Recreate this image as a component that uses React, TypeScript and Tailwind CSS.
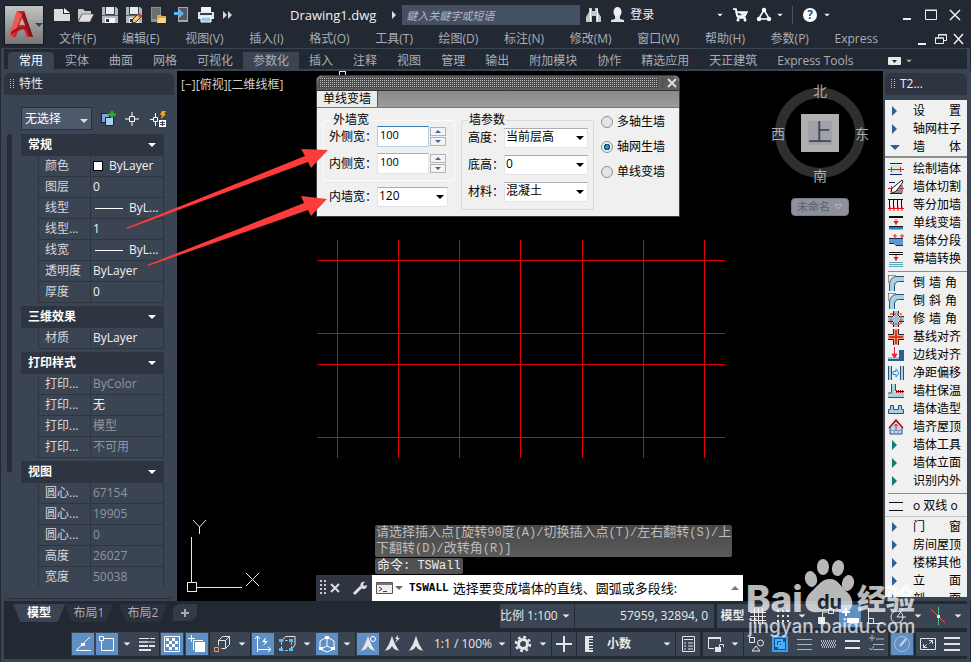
import type { ReactNode } from "react";
import clsx from "clsx";

type IconProps = { children: ReactNode; className?: string; size?: number };

function Icon({ children, className, size = 16 }: IconProps) {
  return (
    <svg viewBox={`0 0 ${size} ${size}`} width={size} height={size} className={clsx("shrink-0", className)} fill="none" aria-hidden="true">
      {children}
    </svg>
  );
}

function Caret({ className }: { className?: string }) {
  return (
    <svg viewBox="0 0 8 4" width="8" height="4" className={clsx("shrink-0", className)} aria-hidden="true">
      <path d="M0 0h8L4 4z" fill="currentColor" />
    </svg>
  );
}

function Grip() {
  return (
    <svg width="5" height="10" className="shrink-0" aria-hidden="true">
      {[0, 2, 4, 6, 8].map((y) => (
        <path key={y} d={`M0 ${y + 0.5}h1M3 ${y + 0.5}h1`} stroke="#b9bec7" />
      ))}
    </svg>
  );
}

/* ---------- title bar ---------- */

const floppy = (
  <>
    <path d="M0 0h14l2 2v14H0z" fill="#b4b7bb" />
    <path d="M3 0h10v8H3z" fill="#3a4049" />
    <path d="M4 0h8v7H4z" fill="#e9eaec" />
    <path d="M0 8h16v1H0z" fill="#5a6069" />
    <path d="M3 11h10v5H3z" fill="#f6f6f6" />
    <path d="M4 12h3v3H4z" fill="#2c323c" />
  </>
);

const quickAccess: { name: string; art: ReactNode }[] = [
  { name: "新建", art: <><path d="M0 2h9v5h7v7H0z" fill="#dcdcdc" /><path d="M10 1v5h6z" fill="#f5f5f5" /></> },
  { name: "打开", art: <><path d="M0 2h5l2 2h6v3H4L0 14z" fill="#c9c9c9" /><path d="M4 7h12l-4 8H0z" fill="#e0e0e0" stroke="#222933" strokeWidth=".5" /></> },
  { name: "保存", art: floppy },
  { name: "另存为", art: <>{floppy}<path d="M6 16l1-4 6-6 3 3-6 6z" fill="#f4c862" stroke="#39332a" /><path d="M12 7l3 3" stroke="#e24b3c" strokeWidth="3" /></> },
  { name: "从移动设备打开", art: <><path d="M1 0h10v15H1z" fill="#8f8f8f" /><path d="M2 1h8v11H2z" fill="#6d6d6d" /><path d="M7 8h4l1 1h4v7H7z" fill="#e0ad4c" /><path d="M9 11h8l-2 5H7z" fill="#f9d68b" /></> },
  { name: "保存到移动设备", art: <><path d="M4 0h10v15H4z" fill="#a8a8a8" /><path d="M5 1h8v12H5z" fill="#55595f" /><path d="M0 5h5V2l5 4.500-5 4.500V8H0z" fill="#55b7f5" /></> },
  { name: "打印", art: <><path d="M3 0h10v5H3z" fill="#f2f2f2" /><path d="M0 5h16v7H0z" fill="#e4e4e4" /><path d="M2 6h12v2H2z" fill="#3a4049" /><path d="M3 10h10v5H3z" fill="#8ecbf7" stroke="#fff" /></> },
];

const menus = ["文件(F)", "编辑(E)", "视图(V)", "插入(I)", "格式(O)", "工具(T)", "绘图(D)", "标注(N)", "修改(M)", "窗口(W)", "帮助(H)", "参数(P)", "Express"];

const ribbonTabs = ["实体", "曲面", "网格", "可视化", "参数化", "插入", "注释", "视图", "管理", "输出", "附加模块", "协作", "精选应用", "天正建筑", "Express Tools"];

function Header() {
  return (
    <header className="flex h-12 shrink-0">
      <button aria-label="应用程序菜单" className="mt-[5px] ml-1 flex h-10 w-10 shrink-0 items-center border border-[#161a20] bg-linear-to-b from-[#c4c4c4] to-[#777]">
        <svg viewBox="0 0 26 28" width="26" height="28" className="ml-1" aria-hidden="true">
          <path d="M8 0h7l9 26h-6l-3-8c-5 0-7 3-8 8H0z" fill="#c9252b" />
          <path d="M8 0L0 26l3 1L13 4z" fill="#ee5a58" />
          <path d="M2 21c5-5 10-6 17-5l1 3c-8-2-13 0-18 6z" fill="#a1151c" />
          <path d="M15 0l9 26-4-1L13 4z" fill="#84131a" />
          <path d="M10 14l3-7 3 7z" fill="#c6a9a9" />
        </svg>
        <Caret className="text-[#39414e]" />
      </button>
      <div className="min-w-0 flex-1">
        <div className="flex h-[29px] items-center pt-px text-[#f0f0f0]">
          <div className="ml-2.5 flex gap-2">
            {quickAccess.map((q) => (
              <button key={q.name} aria-label={q.name}>
                <Icon>{q.art}</Icon>
              </button>
            ))}
            <button aria-label="更多">
              <Icon><path d="M1 4l4 4-4 4zM6 4l4 4-4 4z" fill="#d6d6d6" /></Icon>
            </button>
          </div>
          <h1 className="ml-13 text-[13px] leading-5 whitespace-nowrap">Drawing1.dwg</h1>
          <svg width="4" height="8" className="mr-1.5 ml-4 shrink-0" aria-hidden="true"><path d="M0 0l4 4-4 4z" fill="#ddd" /></svg>
          <input aria-label="搜索" placeholder="鍵入关鍵字或短语" className="h-5 w-[178px] bg-[#465063] px-1 text-[11px] italic outline-none placeholder:text-[#b4bac4]" />
          <button aria-label="查找" className="ml-1.5">
            <Icon>
              <path d="M3 1h3v3h3V1h3v4l3 5v5h-5V9H6v6H0v-5l3-5z" fill="#c4c8cd" />
              <path d="M4.500 2v12M11.500 2v12" stroke="#fff" />
            </Icon>
          </button>
          <button className="ml-2 flex items-center gap-1 text-xs">
            <Icon><ellipse cx="7.500" cy="5" rx="4" ry="5" fill="#eceef0" /><path d="M5 9h5v3l4 1v2H1v-2l4-1z" fill="#dfe1e4" /></Icon>
            登录
          </button>
          <div className="ml-auto flex items-center pr-2">
            <Caret className="mr-2 scale-75" />
            <button aria-label="应用商店"><Icon><path d="M1 2h3l2 9h8M4 5h11l-2 4H5z" stroke="#fff" strokeWidth="1.500" fill="#e4e8ee" /><circle cx="6" cy="13" r="1.500" fill="#fff" /><circle cx="13" cy="13" r="1.500" fill="#fff" /></Icon></button>
            <button aria-label="保持连接" className="mr-1 ml-2"><Icon><path d="M8 3L2.500 12h11z" stroke="#fff" strokeWidth="1.500" /><circle cx="8" cy="3" r="2.200" fill="#fff" /><circle cx="3" cy="12" r="2.200" fill="#fff" /><circle cx="13" cy="12" r="2.200" fill="#fff" /></Icon></button>
            <Caret className="scale-75" />
            <span className="mr-2.5 ml-2 h-4.5 w-px bg-[#4b5568]" />
            <button aria-label="帮助" className="flex h-3.5 w-3.5 items-center justify-center rounded-full bg-white text-xs font-bold text-[#1f4e9c]">?</button>
            <Caret className="ml-1.5 scale-75" />
            <div className="ml-17 flex items-center gap-2">
              <button aria-label="最小化"><Icon><path d="M4 12h8" stroke="#eee" strokeWidth="2" /></Icon></button>
              <button aria-label="最大化"><Icon><path d="M2.500 3.500h11v9h-11z" stroke="#eee" /><path d="M2 3h12" stroke="#eee" /></Icon></button>
              <button aria-label="关闭"><Icon><path d="M3 3l10 10M13 3L3 13" stroke="#eee" strokeWidth="1.500" /></Icon></button>
            </div>
          </div>
        </div>
        <nav className="flex h-[19px] items-center pl-[15px] text-xs whitespace-nowrap text-[#a9aeb6]">
          <div className="flex max-w-[819px] flex-1 justify-between">
            {menus.map((m) => (
              <button key={m}>{m}</button>
            ))}
          </div>
          <div className="ml-auto flex gap-0.5 pr-1">
            <button aria-label="最小化图形"><Icon><path d="M3 13h8" stroke="#eee" strokeWidth="2" /></Icon></button>
            <button aria-label="还原图形"><Icon><path d="M5.500 6V3.500h8v6H11M2.500 7h8v5.500h-8z" stroke="#eee" /><path d="M5 4h9M2 7h9" stroke="#eee" /></Icon></button>
            <button aria-label="关闭图形"><Icon><path d="M3 3l9 10M12 3L3 13" stroke="#eee" strokeWidth="1.500" /></Icon></button>
          </div>
        </nav>
      </div>
    </header>
  );
}

function Ribbon() {
  return (
    <nav className="mx-px flex h-[23px] shrink-0 items-end border-x-3 border-t border-b-2 border-[#3b4453] bg-[#222933] pl-1 text-xs whitespace-nowrap text-[#a9aeb6]">
      <button className="mr-px h-[17px] w-[46px] rounded-t-sm bg-[#3b4453] leading-[17px] text-white">常用</button>
      {ribbonTabs.map((t) => (
        <button key={t} className={clsx("h-[17px] px-2.5 leading-[17px]", t === "参数化" && "bg-[#3b4453]")}>
          {t}
        </button>
      ))}
      <button aria-label="最小化功能区" className="ml-6 flex h-[17px] items-center gap-1">
        <svg width="13" height="8" aria-hidden="true"><rect width="13" height="8" rx="1" fill="#e8e8e8" /><path d="M4 3h5L6.500 6z" fill="#222933" /></svg>
        <Caret className="scale-75" />
      </button>
    </nav>
  );
}

/* ---------- properties palette ---------- */

type Row = { label: string; value: string; kind?: "swatch" | "line"; muted?: boolean };

const sections: { title: string; rows: Row[] }[] = [
  {
    title: "常规",
    rows: [
      { label: "颜色", value: "ByLayer", kind: "swatch" },
      { label: "图层", value: "0" },
      { label: "线型", value: "ByL...", kind: "line" },
      { label: "线型...", value: "1" },
      { label: "线宽", value: "ByL...", kind: "line" },
      { label: "透明度", value: "ByLayer" },
      { label: "厚度", value: "0" },
    ],
  },
  { title: "三维效果", rows: [{ label: "材质", value: "ByLayer" }] },
  {
    title: "打印样式",
    rows: [
      { label: "打印...", value: "ByColor", muted: true },
      { label: "打印...", value: "无" },
      { label: "打印...", value: "模型", muted: true },
      { label: "打印...", value: "不可用", muted: true },
    ],
  },
  {
    title: "视图",
    rows: [
      { label: "圆心...", value: "67154", muted: true },
      { label: "圆心...", value: "19905", muted: true },
      { label: "圆心...", value: "0", muted: true },
      { label: "高度", value: "26027", muted: true },
      { label: "宽度", value: "50038", muted: true },
    ],
  },
];

function PropertiesPanel() {
  return (
    <aside className="flex w-[177px] shrink-0 flex-col border-l border-[#222933] bg-[#3b4453] px-[3px] pt-0.5 text-xs">
      <h2 className="flex h-[22px] shrink-0 items-center gap-1 rounded-t-md bg-[#2e3440] pl-1.5 text-[#e8e8e8]">
        <Grip />
        特性
      </h2>
      <div className="mt-3 flex h-[23px] items-center pl-[17px]">
        <div className="relative h-[23px] w-[71px]">
          <select aria-label="选择对象" className="h-full w-full appearance-none border border-[#2a303b] bg-[#4d586b] pl-[3px] text-white outline-none">
            <option>无选择</option>
          </select>
          <Caret className="pointer-events-none absolute top-3 right-1 text-[#ddd]" />
        </div>
        <button aria-label="切换 PICKADD" className="ml-2">
          <Icon><path d="M1.500 2.500h8v9h-8z" fill="#7ba6dc" stroke="#1c2430" /><path d="M5.500 6.500h8v8h-8z" fill="#aecbf0" stroke="#1c2430" /><path d="M12 0v7M8 3.500h8" stroke="#23b423" strokeWidth="2.500" /></Icon>
        </button>
        <button aria-label="选择对象" className="ml-2">
          <Icon><path d="M8 1v4M8 11v4M1 8h4M11 8h4" stroke="#fff" /><path d="M5.500 5.500h5v5h-5z" stroke="#fff" /></Icon>
        </button>
        <button aria-label="快速选择" className="ml-2.5">
          <Icon><path d="M5.500 2v4M5.500 11v4M0 8.500h3" stroke="#fff" /><path d="M3.500 6.500h4v4h-4z" stroke="#fff" /><path d="M12 0h4l-2 3h2l-5 5 1-4h-2z" fill="#f5a623" /><path d="M9 9h7v7H9z" fill="#fff" /><path d="M10 11.500h5M10 13.500h5M12.500 10v5" stroke="#39414e" /></Icon>
        </button>
      </div>
      <div className="mt-1 flex min-h-0 flex-1 gap-[9px] overflow-hidden pl-[3px]">
        <div className="h-[338px] w-[5px] shrink-0 rounded-full bg-[#272d38]" />
        <div className="flex w-[143px] flex-col gap-[3px]">
          {sections.map((s) => (
            <section key={s.title}>
              <h3 className="flex h-[22px] items-center justify-between bg-[#2e3440] pr-2 pl-[7px] font-bold text-white">
                {s.title}
                <Caret />
              </h3>
              <table className="ml-[17px] w-[126px] table-fixed border-separate border-spacing-0">
                <tbody>
                  {s.rows.map((r, i) => (
                    <tr key={i} className="h-[21px]">
                      <th className="h-[21px] w-[53px] border border-t-0 border-[#2e3440] p-0 pl-1.5 text-left leading-4 font-normal whitespace-nowrap text-[#d5d8dc]">{r.label}</th>
                      <td className={clsx("h-[21px] border-r border-b border-[#2e3440] p-0 pl-0.5 leading-4 whitespace-nowrap", r.muted ? "text-[#8f959f]" : "text-[#f0f0f0]")}>
                        <div className="flex items-center">
                          {r.kind === "swatch" && <span className="mr-1.5 h-2.5 w-2.5 border border-black bg-white" />}
                          {r.kind === "line" && <span className="mr-1.5 ml-0.5 h-px w-7 bg-white" />}
                          {r.value}
                        </div>
                      </td>
                    </tr>
                  ))}
                </tbody>
              </table>
            </section>
          ))}
        </div>
      </div>
      <div className="h-3 shrink-0 rounded-b-md border-b border-[#2a303b]" />
      <div className="h-0.5 shrink-0" />
    </aside>
  );
}

/* ---------- drawing area ---------- */

const gridX = [160, 221, 282, 343, 405, 466, 527];
const gridY = [189, 262, 293, 366];

function Field({ label, children }: { label: string; children: ReactNode }) {
  return (
    <label className="flex items-center">
      <span className="w-12 shrink-0">{label}</span>
      {children}
    </label>
  );
}

function Spin({ label, focused }: { label: string; focused?: boolean }) {
  return (
    <div className="flex h-[21px] items-center">
      <Field label={label}>
        <input defaultValue="100" className={clsx("h-[21px] w-[52px] border bg-white px-0.5 pb-1 text-[11px] outline-none", focused ? "border-[#b5cfe7] border-t-[#3d7bad]" : "border-[#e2e3ea] border-t-[#abadb3]")} />
      </Field>
      <div className="ml-px flex flex-col">
        <button aria-label={`${label}增加`} className="flex h-[9px] w-4 items-center justify-center border border-[#b4b4b4] bg-[#f4f4f4]">
          <svg width="6" height="3" aria-hidden="true"><path d="M0 3h6L3 0z" fill="#4660a8" /></svg>
        </button>
        <button aria-label={`${label}减少`} className="mt-px flex h-[9px] w-4 items-center justify-center border border-[#b4b4b4] bg-[#f4f4f4]">
          <svg width="6" height="3" aria-hidden="true"><path d="M0 0h6L3 3z" fill="#4660a8" /></svg>
        </button>
      </div>
    </div>
  );
}

function Drop({ value, className }: { value: string; className: string }) {
  return (
    <span className={clsx("relative block h-5", className)}>
      <select className="block h-5 w-full appearance-none border border-[#e2e3ea] border-t-[#abadb3] bg-white pb-0.5 pl-px outline-none">
        <option>{value}</option>
      </select>
      <Caret className="pointer-events-none absolute top-2 right-1" />
    </span>
  );
}

function WallDialog() {
  return (
    <div className="absolute top-1 left-[139px] w-[364px] rounded-t-md border border-[#3c3c3c] bg-[#f0f0f0] text-xs text-black">
      <div className="flex h-3.5 items-center gap-1 rounded-t-md bg-[#5c5c5c] px-0.5">
        <div className="h-2.5 flex-1 bg-[conic-gradient(#c0c0c0_25%,#484848_0)] bg-size-[2px_2px]" />
        <span className="h-2.5 w-px bg-[#444]" />
        <button aria-label="关闭">
          <Icon size={10}><path d="M1 1l8 8M9 1L1 9" stroke="#ddd" strokeWidth="2" /></Icon>
        </button>
      </div>
      <div className="flex h-[18px] border-y border-[#333] border-b-[#777] bg-linear-to-b from-[#8a8a8a] to-[#9c9c9c]">
        <button className="w-[61px] border-r border-[#555] bg-[#ececec] leading-4">单线变墙</button>
      </div>
      <form className="flex gap-1.5 px-1.5 pt-1.5 pb-1.5">
        <div className="w-[132px]">
          <fieldset className="min-w-0 rounded-xs border border-[#fcfcfc] pb-1.5 pl-[5px]">
            <legend className="px-1 leading-3">外墙宽</legend>
            <div className="flex flex-col gap-1.5">
              <Spin label="外侧宽：" focused />
              <Spin label="内侧宽：" />
            </div>
          </fieldset>
          <div className="mt-1.5 pl-1.5">
            <Field label="内墙宽：">
              <Drop value="120" className="w-[71px]" />
            </Field>
          </div>
        </div>
        <fieldset className="h-24 w-[133px] min-w-0 rounded-xs border border-[#d2dde2] pl-1.5">
          <legend className="px-px leading-3">墙参数</legend>
          <div className="flex flex-col gap-[7px] pt-0.5 [&_label>span:first-child]:w-9">
            <Field label="高度："><Drop value="当前层高" className="w-[84px]" /></Field>
            <Field label="底高："><Drop value="0" className="w-[84px]" /></Field>
            <Field label="材料："><Drop value="混凝土" className="w-[84px]" /></Field>
          </div>
        </fieldset>
        <div className="flex flex-col gap-[9px] pl-px">
          {["多轴生墙", "轴网生墙", "单线变墙"].map((r) => (
            <label key={r} className="flex h-4 items-center gap-1">
              <input
                type="radio"
                name="mode"
                defaultChecked={r === "轴网生墙"}
                className="h-3 w-3 appearance-none rounded-full border border-[#8e8f8f] bg-[#e4e4e4] checked:bg-[radial-gradient(#2a9fd0_15%,#0c3d63_45%,#eee_50%)]"
              />
              {r}
            </label>
          ))}
        </div>
      </form>
    </div>
  );
}

function ViewCube() {
  return (
    <div className="absolute top-2 right-3 flex w-[104px] flex-col items-center">
      <svg width="104" height="112" viewBox="0 0 104 112" className="font-[family-name:'Noto_Sans_CJK_SC',sans-serif]">
        <circle cx="53" cy="54" r="40" stroke="#2f2f2f" strokeWidth="10" fill="none" />
        <rect x="34" y="35" width="38" height="38" fill="#b0b0b0" />
        <rect x="41" y="42" width="24" height="24" fill="#a0a2aa" />
        <g fill="#acacac" fontSize="14" textAnchor="middle">
          <text x="53" y="17">北</text>
          <text x="53" y="102">南</text>
          <text x="11" y="60">西</text>
          <text x="95" y="60">东</text>
        </g>
        <text x="53" y="62" fontSize="24" fill="#444c57" textAnchor="middle">上</text>
      </svg>
      <button className="mt-[7px] ml-0.5 flex h-[18px] w-[58px] items-center justify-center gap-1 rounded-sm border border-[#777a84] bg-[#8e909c] text-[11px] text-[#5c5f69]">
        未命名
        <svg width="9" height="6" aria-hidden="true"><path d="M1 .5h7L4.500 5z" fill="none" stroke="#b5b7c0" /></svg>
      </button>
    </div>
  );
}

/* Latin runs sit one size below the Chinese text */
function Mixed({ text }: { text: string }) {
  return text.split(/([\x20-\x7e]+)/).map((part, i) => (
    <span key={i} className={clsx(i % 2 === 1 && "text-xs leading-[15px]")}>
      {part}
    </span>
  ));
}

function CommandLine() {
  return (
    <div className="absolute bottom-0 left-[139px] w-[427px]">
      <div className="ml-[59px] flex flex-col items-start font-[family-name:'Liberation_Mono','Noto_Sans_CJK_SC',monospace] text-[13px] leading-[15px] whitespace-nowrap text-[#bcbcbc]">
        <p className="rounded-xs bg-linear-to-b from-[#484848] to-[#5a5a5a] px-px">
          <Mixed text="请选择插入点[旋转90度(A)/切换插入点(T)/左右翻转(S)/上" />
          <br />
          <Mixed text="下翻转(D)/改转角(R)]" />
        </p>
        <p className="mt-px rounded-xs bg-[#525252] px-0.5 text-[#ececec]"><Mixed text="命令: TSWall" /></p>
      </div>
      <div className="mt-px flex h-[26px] bg-[#2e3440]">
        <div className="flex w-14 items-center pl-1">
          <svg width="6" height="18" aria-hidden="true">
            {[1, 5, 9, 13].map((y) => <path key={y} d={`M0 ${y}h2v2H0zM4 ${y}h2v2H4z`} fill="#c9c9c9" />)}
          </svg>
          <Icon size={10} className="mr-4 ml-1"><path d="M1 1l8 8M9 1L1 9" stroke="#ddd" strokeWidth="2" /></Icon>
          <Icon className="-ml-1"><path d="M2 14l7-7" stroke="#ddd" strokeWidth="3" /><path d="M9 8C7 4 10 1 13 2l-2 2 1 2 3-1c0 4-3 5-6 3z" fill="#ddd" /></Icon>
        </div>
        <label className="flex flex-1 items-center bg-white pr-1 pl-1 text-black">
          <svg width="17" height="12" aria-hidden="true"><path d="M.5.5h16v11H.5z" fill="#eee" stroke="#555" /><path d="M1 2h15" stroke="#777" strokeWidth="2" /><path d="M3 5l3 2-3 2M7 9.500h4" fill="none" stroke="#444" /></svg>
          <Caret className="ml-0.5 text-[#666]" />
          <span className="ml-1.5 font-[family-name:'DejaVu_Sans_Mono',monospace] text-[11px] font-bold">TSWALL</span>
          <span className="ml-1 text-[13px] leading-5 whitespace-nowrap">选择要变成墙体的直线、圆弧或多段线:</span>
          <input aria-label="命令" className="w-0 min-w-0 flex-1 outline-none" />
          <Caret className="rotate-180 text-[#777]" />
        </label>
      </div>
    </div>
  );
}

function Canvas() {
  return (
    <main className="relative min-w-0 flex-1 overflow-hidden bg-black">
      <p className="pt-1.5 pl-1 text-xs leading-4 text-[#d0d0d0]">[−][俯视][二维线框]</p>
      <svg className="absolute inset-0 h-full w-full" aria-hidden="true" shapeRendering="crispEdges">
        <g stroke="#e60000">
          {gridX.map((x) => <path key={x} d={`M${x + 0.5} 169V387`} />)}
          {gridY.map((y) => <path key={y} d={`M140 ${y + 0.5}H548`} />)}
        </g>
        <g stroke="#e8e8e8" fill="none">
          <path d="M14.500 466v46M19 516.500h46M10.500 511.500h9v9h-9z" />
          <path d="M162.500 5V.5h6V5" />
        </g>
        <path d="M16 449l6.500 7 6.500-7M22.500 456v7M69 502l13 13M82 502l-13 13" stroke="#e8e8e8" fill="none" shapeRendering="auto" />
      </svg>
      <WallDialog />
      <ViewCube />
      <CommandLine />
    </main>
  );
}

/* ---------- T20 tool menu ---------- */

type Tool = { text: string; art: ReactNode };

const right = <path d="M4 3l5 5-5 5z" fill="#2f6095" />;
const teal = <path d="M4 3l5 5-5 5z" fill="#0b7f78" />;
const down = <path d="M2 6h10l-5 5z" fill="#2f6095" />;
const pipe = (
  <>
    <path d="M4 16v-5c0-4 2-7 6-7h6" stroke="#a9d3df" strokeWidth="5" />
    <path d="M1.500 16v-5C1.500 5 4 1.500 9 1.500h7M6.500 16v-5c0-3 2-4.500 4-4.500H16" stroke="#2c4f7c" />
    <path d="M.5.500h7M.5.500v8" stroke="#333" strokeDasharray="1 1" />
  </>
);

const mainTools: Tool[] = [
  { text: "设置", art: right },
  { text: "轴网柱子", art: right },
  { text: "墙体", art: down },
];

const wallTools: Tool[] = [
  { text: "绘制墙体", art: <><path d="M2 4h12v8H2z" fill="#d6e8cf" /><path d="M2 2.500h12M2 13.500h12" stroke="#1b1b7a" /><path d="M0 8.500h16M3.500 6v5M12.500 6v5" stroke="#d22" /></> },
  { text: "墙体切割", art: <><path d="M8 6h7v8H5z" fill="#8e8e8e" /><path d="M1 3.500h6M2 14.500h12" stroke="#1b1b7a" /><path d="M0 9.500h5M12 9.500h4M3.500 7v5" stroke="#d22" /><path d="M3 13c0-3 2-5 4-6l7-6 1 2-6 8c-2 2-3 3-6 2z" fill="#fff" stroke="#111" /></> },
  { text: "等分加墙", art: <><path d="M0 2.500h15M1.500 2v10M5.500 2v10M9.500 2v10M13.500 2v10" stroke="#111" /><path d="M0 11.500h16M2 9v5M6 9v5M10 9v5M14 9v5" stroke="#e11" /></> },
  { text: "单线变墙", art: <><path d="M1 2h14" stroke="#111" strokeWidth="2" /><path d="M1 13h14" stroke="#1289c9" strokeWidth="3" /><path d="M1 11.500h14" stroke="#111" /><path d="M8 4v6M6 6.500h4L8 9z" fill="#e22" stroke="#e22" /></> },
  { text: "墙体分段", art: <><path d="M1 6h14v6H8L6 10H1z" fill="#5d97cf" /><path d="M1 5.500h14M1 10.500h5l2 2h7" stroke="#1c2b4d" /><path d="M5 3h4M7 1v4M12 3h4M14 1v4" stroke="#e22" /></> },
  { text: "幕墙转换", art: <><path d="M1 1.500h14M1 3.500h14" stroke="#111" /><path d="M1 11.500h14M1 13.500h14M1 15.500h14" stroke="#55a8b5" /><path d="M8 4v6M6 6.500h4L8 9z" fill="#e22" stroke="#e22" /></> },
];

const editTools: Tool[] = [
  { text: "倒墙角", art: pipe },
  { text: "倒斜角", art: pipe },
  { text: "修墙角", art: <><path d="M6 0h4v16H6zM0 6h16v4H0z" fill="#9dbedc" /><path d="M5.500 0v5M10.500 0v5M5.500 11v5M10.500 11v5M0 5.500h5M0 10.500h5M11 5.500h5M11 10.500h5" stroke="#222" /><path d="M3 3h10v10H3z" stroke="#e0522d" strokeWidth="1.500" strokeDasharray="2 1" /></> },
  { text: "基线对齐", art: <><path d="M6 0h4v16H6zM0 6h16v4H0z" fill="#f7a48e" /><path d="M5.500 0v5.500H0M10.500 0v5.500H16M5.500 16v-5.500H0M10.500 16v-5.500H16" stroke="#222" /><path d="M8 1v14M1 8h14" stroke="#e23a16" strokeWidth="2" /></> },
  { text: "边线对齐", art: <><path d="M11 3h5v11H0v-3h11z" fill="#2f5f92" /><path d="M0 11h11" stroke="#9ec7dc" strokeWidth="2" /><path d="M6.500 0v9M4 7h5l-2.500 4z" fill="#e23" stroke="#e23" /></> },
  { text: "净距偏移", art: <><path d="M1 1h3v14H1zM13 1h3v14h-3z" fill="#a9d3df" /><path d="M.5 1v14M3.500 1v14M12.500 1v14M15.500 1v14" stroke="#2c4f7c" /><path d="M5 6.500h3V4l3 4-3 4V9.500H5z" stroke="#1593e6" /></> },
  { text: "墙柱保温", art: <><path d="M3 1h4v8h9v5H0v-4h3z" fill="#a9d3df" /><path d="M3.500 1v9H0M7.500 1v7M0 14.500h16" stroke="#2c4f7c" /><path d="M8 8.500h8" stroke="#111" /><path d="M8 7.500h8M8 9.500h8" stroke="#b5121b" strokeDasharray="1 1" /></> },
  { text: "墙体造型", art: <path d="M.5 12.500V8.500h2v-4h3v4h5v-4h3v4h2v4z" fill="#a9d3df" stroke="#2c4f7c" /> },
  { text: "墙齐屋顶", art: <><path d="M2 8l6-6 6 6v7H2z" fill="#c3d5ea" stroke="#26518b" /><path d="M1 9l7-8 7 8" stroke="#b5121b" strokeWidth="1.500" /><path d="M8 11V5M6 7l2-2 2 2" stroke="#e22" /><path d="M3 11.500h10M6.500 12v3M10.500 12v3" stroke="#7a97bd" /></> },
  { text: "墙体工具", art: teal },
  { text: "墙体立面", art: teal },
  { text: "识别内外", art: teal },
];

const doubleLine: Tool[] = [{ text: "o双线o", art: <path d="M1 4.500h14M1 12.500h14" stroke="#111" /> }];

const moreTools: Tool[] = [
  { text: "门窗", art: right },
  { text: "房间屋顶", art: right },
  { text: "楼梯其他", art: right },
  { text: "立面", art: right },
  { text: "剖面", art: right },
];

function ToolList({ tools }: { tools: Tool[] }) {
  return (
    <ul>
      {tools.map((t) => (
        <li key={t.text}>
          <button className="flex h-[18px] w-full items-center gap-[9px] pl-[3px] leading-[18px]">
            <Icon>{t.art}</Icon>
            <span className={clsx("flex w-12 justify-between", t.text.length === 3 && "pr-1")}>
              {t.text === "o双线o" ? "o 双线 o" : [...t.text].map((c, i) => <span key={i}>{c}</span>)}
            </span>
          </button>
        </li>
      ))}
    </ul>
  );
}

function ToolPanel() {
  return (
    <aside className="flex w-[88px] shrink-0 flex-col bg-[#3b4453] pt-0.5 pr-1 pb-1 pl-0.5 text-xs">
      <h2 className="mb-[5px] flex h-[22px] shrink-0 items-center gap-1 rounded-t-md bg-[#2e3440] pl-1.5 text-[#eee]">
        <Grip />
        T2...
      </h2>
      <div className="min-h-0 flex-1 overflow-hidden bg-[#f0f0f0] pt-0.5 text-black">
        <ToolList tools={mainTools} />
        <div className="mb-0.5 h-0.5 bg-[#8c8c8c]" />
        <ToolList tools={wallTools} />
        <div className="mt-[3px] mb-0.5 ml-[3px] h-px bg-[#8c8c8c]" />
        <ToolList tools={editTools} />
        <div className="my-[3px] ml-[3px] h-px bg-[#8c8c8c]" />
        <ToolList tools={doubleLine} />
        <div className="mt-px mb-px h-px bg-[#c4c4c4]" />
        <ToolList tools={moreTools} />
      </div>
    </aside>
  );
}

/* ---------- status bars ---------- */

function Cell({ name, on, children }: { name: string; on?: boolean; children: ReactNode }) {
  return (
    <button aria-label={name} className={clsx("flex h-6 w-6 shrink-0 items-center justify-center", on && "border border-[#3b4453] bg-[#5f8fc4]")}>
      <Icon size={18}>{children}</Icon>
    </button>
  );
}

function More() {
  return (
    <button aria-label="更多选项" className="flex h-6 w-4 shrink-0 items-center justify-center">
      <Caret className="scale-90" />
    </button>
  );
}

function Group({ children, className }: { children: ReactNode; className?: string }) {
  return <div className={clsx("flex h-6 items-center bg-[#3b4453]", className)}>{children}</div>;
}

const w = "#e6e6e6";
const person = <path d="M9 1l3 8 4 7-5-2-2-3-2 3-5 2 4-7z" fill={w} />;
const cube = <path d="M5.500 5.500l4-4h7v8l-4 4M5.500 5.500h7v8h-4M5.500 5.500v5M12.500 5.500l4-4" stroke={w} />;

function StatusBar() {
  return (
    <footer className="mx-px flex shrink-0 flex-col gap-1 border-x-3 border-b-3 border-[#3b4453] bg-[#222933] pt-[3px] pb-[3px] text-xs text-[#e8e8e8]">
      <div className="flex h-6 items-center">
        <nav className="flex h-full items-start text-[#a9aeb6]">
          <button className="ml-[9px] h-[18px] w-[52px] bg-[#3b4453] leading-4 font-bold text-white [clip-path:polygon(0_0,100%_0,86%_100%,14%_100%)]">模型</button>
          <button className="h-[18px] w-12 bg-[#2b323e] leading-4 [clip-path:polygon(0_0,100%_0,86%_100%,14%_100%)]">布局1</button>
          <button className="ml-1.5 h-[18px] w-12 bg-[#2b323e] leading-4 [clip-path:polygon(0_0,100%_0,86%_100%,14%_100%)]">布局2</button>
          <button aria-label="新建布局" className="ml-1.5 flex h-[17px] w-6 items-center justify-center rounded-tl-lg rounded-br-lg bg-[#333b49]">
            <Icon size={10}><path d="M5 1v8M1 5h8" stroke="#aaa" strokeWidth="2" /></Icon>
          </button>
        </nav>
        <button className="ml-auto flex h-6 w-[74px] items-center gap-1 bg-[#3b4453] whitespace-nowrap">
          比例 1:100
          <Caret className="scale-90" />
        </button>
        <output className="ml-px h-6 w-[139px] bg-[#3b4453] pr-1.5 text-right leading-6">57959, 32894, 0</output>
        <div className="ml-[3px] flex h-6 w-[250px] items-center bg-[#3b4453]">
          <button className="w-[29px] pl-0.5 whitespace-nowrap font-bold">模型</button>
          <Cell name="栅格"><path d="M5.500 1v16M9.500 1v16M13.500 1v16M1 5.500h16M1 9.500h16M1 13.500h16" stroke={w} /></Cell>
          <Cell name="捕捉模式"><path d="M4 4h14M4 9h14M4 14h14" stroke={w} strokeWidth="2" strokeDasharray="2 3" /></Cell>
          <More />
          <div className="ml-1 flex">
            <Cell name="推断约束"><path d="M1 10h7v7H1z" fill={w} /><path d="M5.500 10V5h6M11.500 1.500h5v5h-5z" stroke={w} /></Cell>
            <Cell name="动态输入" on><path d="M5 1v8M1 5h8" stroke="#fff" strokeWidth="2" /><path d="M6 11h12v5H6z" fill="#fff" /></Cell>
            <Cell name="正交模式"><path d="M3.500 1v15.500H17M3.500 11.500h5v5" stroke={w} /></Cell>
          </div>
          <Cell name="极轴追踪"><circle cx="8" cy="10" r="6" stroke={w} /><path d="M8 10l6-8M8 10h9" stroke={w} /></Cell>
          <More />
          <Cell name="等轴测草图"><path d="M2 2l14 14" stroke="#e05c5c" /><path d="M9.500 0v18" stroke="#4fc27a" /><path d="M8 8h3v3H8z" fill={w} /></Cell>
          <More />
        </div>
      </div>
      <div className="flex h-6 items-center gap-px pl-[67px]">
        <Group>
          <Cell name="对象捕捉追踪" on><path d="M16 2L2 15.500h15" stroke="#fff" /><path d="M7 8h4v3H7z" fill="#fff" /></Cell>
          <Cell name="对象捕捉" on><path d="M6 3.500h9.500v12h-12V6" stroke="#fff" /><path d="M1.500 1.500h4v4h-4z" stroke="#fff" /></Cell>
          <More />
          <Cell name="线宽"><path d="M1 3.500h10M12 3.500h5M1 7h9" stroke={w} /><path d="M1 7h16" stroke={w} strokeWidth="1" /><path d="M1 11h9M11 11h6M1 15h12" stroke={w} strokeWidth="2" /></Cell>
        </Group>
        <Group>
          <Cell name="透明度" on>
            <path d="M1.500 1.500h15v15h-15z" stroke="#fff" />
            {[4, 7, 10, 13].map((y, i) => <path key={y} d={i % 2 ? `M6 ${y + 0.5}h9` : `M3 ${y + 0.5}h12`} stroke="#fff" strokeWidth="3" strokeDasharray="3 3" />)}
          </Cell>
        </Group>
        <Group>
          <Cell name="选择循环" on><path d="M7 7h10v10H7z" fill="#fff" /><path d="M5.500 15V5.500H15" stroke="#fff" /><path d="M3.500 0v7M0 3.500h7" stroke="#fff" /></Cell>
        </Group>
        <Group>
          <Cell name="三维对象捕捉">{cube}<path d="M1.500 12.500h4v4h-4z" stroke="#f09a63" /></Cell>
          <More />
        </Group>
        <Group>
          <Cell name="动态 UCS" on><path d="M3.500 17V2M1 4l2.500-3L6 4M3 14.500h13M14 12l3 2.500-3 2.500" stroke="#fff" /><path d="M12 2L8 7h3l-2 4 5-5h-3z" fill="#fff" /></Cell>
          <Cell name="选择过滤"><path d="M4 5l4-3.500h9v8L14 14" stroke={w} /><path d="M3.500 5.500h10v10h-10z" stroke={w} strokeDasharray="2 2" /><path d="M1 4h4v3H1zM11 4h4v3h-4zM1 13h4v3H1zM11 13h4v3h-4z" fill="#5fb8f5" /></Cell>
          <More />
          <Cell name="小控件" on><path d="M9 2l7 4v8l-7 3-7-3V6zM9 4v7M9 11l-6 3M9 11l6 3" stroke="#fff" /><path d="M7 1h4v3H7zM1 12h4v3H1zM13 12h4v3h-4z" fill="#fff" /></Cell>
          <More />
        </Group>
        <Group>
          <Cell name="注释可见性" on>{person}<circle cx="14" cy="4" r="2.500" stroke="#fff" fill="#5f8fc4" /></Cell>
          <Cell name="自动缩放">{person}<path d="M15 0l-3 4h2l-2 4 5-5h-2z" fill={w} /></Cell>
          <Cell name="注释比例">{person}</Cell>
          <button className="w-[66px] pl-1 whitespace-nowrap">1:1 / 100%</button>
          <More />
        </Group>
        <Group>
          <Cell name="切换工作空间"><circle cx="9" cy="9" r="4.500" stroke={w} strokeWidth="3" /><circle cx="9" cy="9" r="7" stroke={w} strokeWidth="2.500" strokeDasharray="2.800 2.700" /></Cell>
          <More />
        </Group>
        <Group>
          <Cell name="注释监视器"><path d="M9 1v16M1 9h16" stroke={w} strokeWidth="2" /></Cell>
        </Group>
        <Group className="w-[98px]">
          <Cell name="单位"><path d="M5 1h8v2H9v1h4v1H9v2h4v1H9v2h4v1H9v2h4v1H9v1h4v2H5z" fill={w} /></Cell>
          <span className="ml-1.5 flex-1 font-bold">小数</span>
          <More />
        </Group>
        <Group>
          <Cell name="快捷特性"><path d="M3.500 1.500h12v15h-12z" stroke={w} /><path d="M5 4.500h9" stroke={w} /><path d="M5 8h2M9 8h5M5 11h2M9 11h5M5 14h2M9 14h5" stroke={w} /></Cell>
        </Group>
        <Group className="ml-0.5">
          <Cell name="锁定用户界面"><path d="M14.500 7V2.500h-12v11H8" stroke={w} /><path d="M2 3h13" stroke={w} strokeWidth="2" /><path d="M9 12h6v5H9z" fill={w} /><path d="M13.500 12V9.500h4V12" stroke={w} /></Cell>
          <More />
        </Group>
        <Group>
          <Cell name="隔离对象"><path d="M2.500 2.500h5v5h-5zM9 11l-4 5h8z" stroke={w} /><circle cx="13.500" cy="8" r="3" stroke={w} /></Cell>
          <Cell name="硬件加速"><path d="M2 2h14v14H2z" fill="#24507e" stroke="#3b9df0" strokeWidth="2" /><path d="M5 5h6v6H5zM8 8h5v5H8z" stroke="#4cadf8" strokeWidth="2" /></Cell>
          <Cell name="线型"><path d="M2 4.500h15M2 9.500h15M2 14.500h15" stroke="#b0b4ba" /></Cell>
          <Cell name="图案"><path d="M2 6h15M3 8h14M2 10h15M3 12h14" stroke="#aeb2b8" strokeWidth="2" strokeDasharray="1 1" /></Cell>
          <Cell name="粗线"><path d="M2 6h15M2 13h15" stroke={w} strokeWidth="2" /></Cell>
          <Cell name="列表"><path d="M5 0v6M2 3h6M9 4h8M6 9.500h11M6 14.500h11M2 13l2 2 3-4" stroke="#b0b4ba" /></Cell>
        </Group>
        <Group className="ml-px">
          <Cell name="图形性能" on><circle cx="9" cy="9" r="7.500" stroke="#a9bdd6" /><path d="M7 11l6-7" stroke="#c9d5e5" strokeWidth="2" /></Cell>
        </Group>
        <Group className="ml-px flex-1">
          <Cell name="全屏显示"><path d="M1.500 3.500h15v11h-15z" stroke={w} /><path d="M4.500 9v3.500H8M4.500 12.500l3-3M10 5.500h3.500V9M13.500 5.500l-3 3" stroke={w} /></Cell>
          <Cell name="自定义"><path d="M1 3h16M1 9h16M1 15h16" stroke={w} strokeWidth="2" /></Cell>
        </Group>
      </div>
    </footer>
  );
}

/* red callouts that cross from the palette into the dialog */
function Callouts() {
  return (
    <svg className="pointer-events-none absolute top-0 left-0" width="340" height="280" aria-hidden="true">
      <path d="M126 228L305 156l-4-7 27 1-17 18-3-6-181 67z" fill="#fb3c3a" />
      <path d="M147 265L304 203l-3-7 26 3-16 17-3-6-160 56z" fill="#fb3c3a" />
    </svg>
  );
}

function Watermark() {
  return (
    <svg className="pointer-events-none absolute right-12 bottom-5 font-[family-name:'Inter','Noto_Sans_CJK_SC',sans-serif]" width="177" height="86" opacity="0.720">
      <g fill="#fff">
        <text x="0" y="56" fontSize="37" fontWeight="800">Bai</text>
        <ellipse cx="65" cy="23" rx="6" ry="8" transform="rotate(-15 65 23)" />
        <ellipse cx="77" cy="11" rx="6" ry="8" />
        <ellipse cx="92" cy="12" rx="6" ry="8" transform="rotate(12 92 12)" />
        <ellipse cx="102" cy="27" rx="6" ry="8" transform="rotate(15 102 27)" />
        <path d="M84 23c8 0 11 8 17 13 7 6 8 18-2 20-7 1-10-1-16-1s-10 2-16 1c-10-2-9-14-2-20 6-5 10-13 19-13z" />
        <text x="111" y="54" fontSize="29" fontWeight="900">经验</text>
        <text x="2" y="77" fontSize="19" fontWeight="500">jingyan.baidu.com</text>
      </g>
      <text x="71" y="53" fontSize="20" fontWeight="700" fill="#20262f">du</text>
    </svg>
  );
}

export default function App() {
  return (
    <div className="relative flex h-screen flex-col overflow-hidden bg-[#222933] font-[family-name:'Open_Sans','Noto_Sans_CJK_SC',sans-serif]">
      <Header />
      <Ribbon />
      <div className="flex min-h-0 flex-1">
        <PropertiesPanel />
        <Canvas />
        <ToolPanel />
      </div>
      <StatusBar />
      <Callouts />
      <Watermark />
    </div>
  );
}
